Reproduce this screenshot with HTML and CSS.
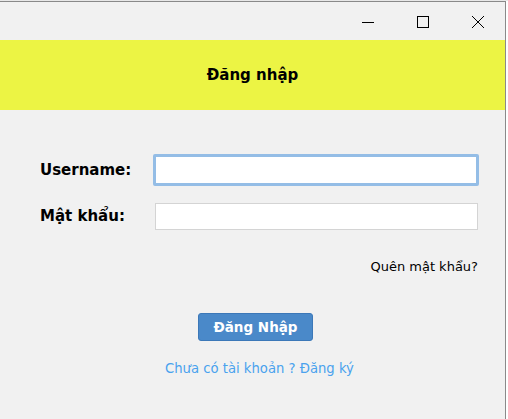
FILE: index.html
```html
<!DOCTYPE html>
<html lang="vi">
<head>
<meta charset="utf-8">
<title>Đăng nhập</title>
<link rel="stylesheet" href="styles.css">
</head>
<body>
<div class="desk"></div>
<div class="window">
  <div class="titlebar">
    <span class="ctl"><svg width="14" height="14" viewBox="0 0 14 14"><path d="M1 7.5H13" stroke="#000" stroke-width="1"/></svg></span>
    <span class="ctl"><svg width="14" height="14" viewBox="0 0 14 14"><rect x="1.5" y="1.5" width="11" height="11" fill="none" stroke="#000" stroke-width="1"/></svg></span>
    <span class="ctl"><svg width="14" height="14" viewBox="0 0 14 14"><path d="M1 1L13 13M13 1L1 13" stroke="#000" stroke-width="1"/></svg></span>
  </div>
  <div class="header">Đăng nhập</div>
  <div class="form">
    <div class="row">
      <label class="lbl">Username:</label>
      <div class="input focus"></div>
    </div>
    <div class="row row2">
      <label class="lbl">Mật khẩu:</label>
      <div class="input"></div>
    </div>
    <div class="forgot">Quên mật khẩu?</div>
    <div class="btnrow"><button class="btn">Đăng Nhập</button></div>
    <div class="signup">Chưa có tài khoản ? Đăng ký</div>
  </div>
</div>
</body>
</html>
```
FILE: styles.css
```css
html, body {
  margin: 0;
  padding: 0;
  background: #ffffff;
  font-family: "DejaVu Sans", "Liberation Sans", sans-serif;
}
.desk {
  height: 1px;
  background: #e8e8e8;
}
.window {
  width: 506px;
  height: 418px;
  border-top: 1px solid #8a8a8a;
  border-right: 1px solid #8a8a8a;
  background: #f1f1f1;
  box-sizing: border-box;
  display: flex;
  flex-direction: column;
}
.titlebar {
  height: 38px;
  display: flex;
  justify-content: flex-end;
  align-items: center;
  padding-right: 0;
  box-sizing: border-box;
}
.ctl {
  width: 55px;
  display: flex;
  justify-content: center;
  padding-top: 2px;
}
.header {
  height: 70px;
  background: #ecf444;
  display: flex;
  align-items: center;
  justify-content: center;
  font-weight: bold;
  font-size: 15px;
  color: #000;
}
.form {
  display: flex;
  flex-direction: column;
  padding-top: 44px;
}
.row {
  display: flex;
  align-items: center;
  height: 32px;
}
.row2 {
  margin-top: 16px;
  height: 28px;
}
.lbl {
  width: 153px;
  padding-left: 40px;
  box-sizing: border-box;
  font-weight: bold;
  font-size: 15px;
  color: #000;
}
.input {
  width: 323px;
  height: 27px;
  margin-left: 2px;
  background: #fff;
  border: 1px solid #d4d4d4;
  box-sizing: border-box;
}
.input.focus {
  width: 326px;
  height: 32px;
  margin-left: 0;
  border: 3px solid #94bde6;
  border-radius: 2px;
}
.forgot {
  align-self: flex-end;
  margin-right: 27px;
  margin-top: 29px;
  font-size: 13px;
  color: #000;
}
.btnrow {
  display: flex;
  margin-top: 39px;
  padding-left: 198px;
}
.btn {
  width: 115px;
  height: 28px;
  background: #4a89c9;
  border: 1px solid #3c78b8;
  border-radius: 3px;
  color: #fff;
  font-family: "DejaVu Sans", sans-serif;
  font-weight: bold;
  font-size: 13.5px;
  padding: 0;
}
.signup {
  margin-top: 20px;
  padding-left: 165px;
  font-size: 13.2px;
  color: #4aa2ee;
}
```
